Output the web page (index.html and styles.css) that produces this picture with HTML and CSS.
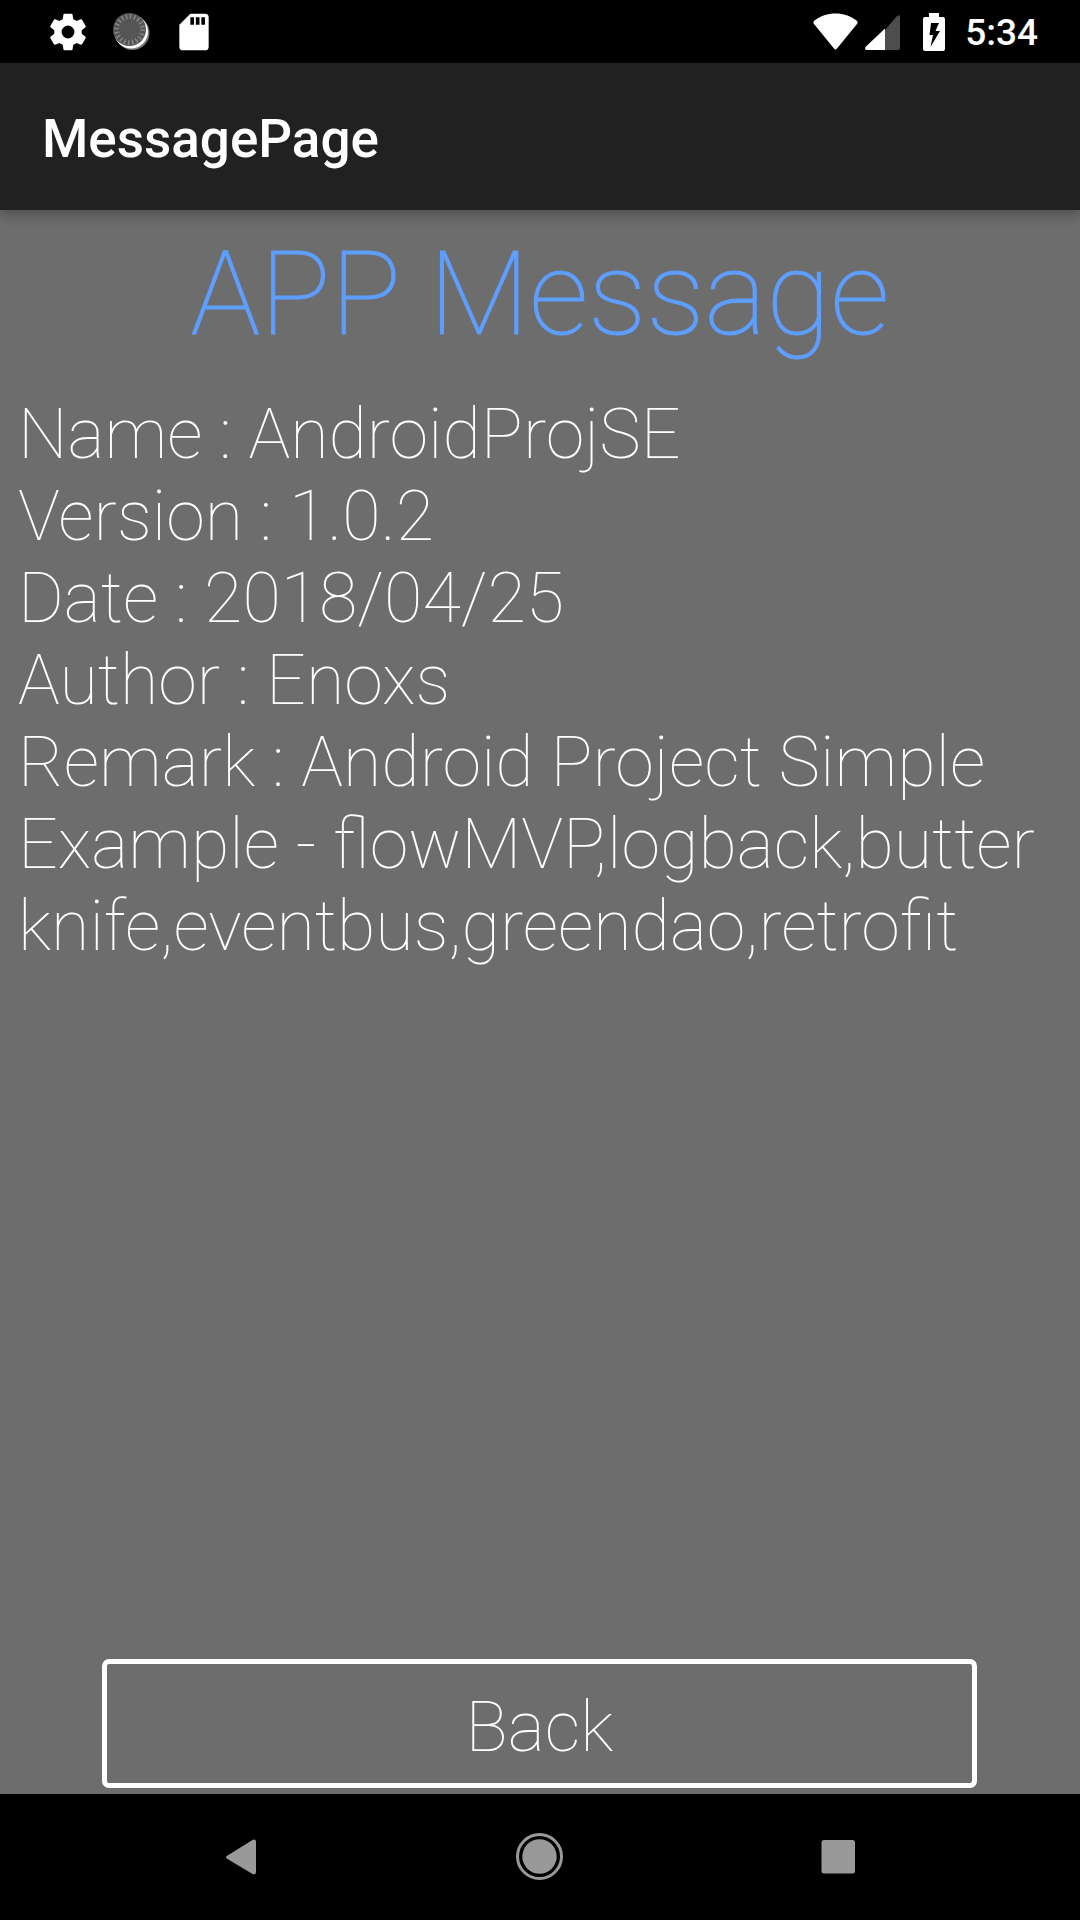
FILE: index.html
```html
<!DOCTYPE html>
<html lang="en">
<head>
<meta charset="utf-8">
<meta name="viewport" content="width=device-width, initial-scale=1">
<title>MessagePage</title>
<link rel="stylesheet" href="styles.css">
</head>
<body>
<div class="status">
  <div class="notices">
    <svg class="icon" viewBox="0 0 24 24" aria-hidden="true"><path fill="#fff" d="M19.43 12.98c.04-.32.07-.64.07-.98s-.03-.66-.07-.98l2.11-1.65c.19-.15.24-.42.12-.64l-2-3.46c-.12-.22-.39-.3-.61-.22l-2.49 1c-.52-.4-1.08-.73-1.69-.98l-.38-2.65C14.46 2.180 14.25 2 14 2h-4c-.25 0-.46.18-.49.42l-.38 2.65c-.61.25-1.17.59-1.69.98l-2.49-1c-.23-.09-.49 0-.61.22l-2 3.460c-.13.22-.07.49.12.64l2.11 1.65c-.04.32-.07.65-.07.98s.03.66.07.98l-2.11 1.65c-.19.15-.24.42-.12.64l2 3.46c.12.22.39.3.61.22l2.49-1c.52.4 1.08.73 1.69.98l.38 2.650c.03.24.24.42.49.42h4c.25 0 .46-.18.49-.42l.38-2.65c.61-.25 1.17-.59 1.69-.98l2.49 1c.23.09.49 0 .61-.22l2-3.46c.12-.22.07-.49-.12-.64zM12 15.500a3.500 3.500 0 1 1 0-7 3.500 3.500 0 0 1 0 7z"/></svg>
    <svg class="icon" viewBox="0 0 44 44" aria-hidden="true">
      <circle cx="23.500" cy="23" r="17" fill="#777"/>
      <circle cx="22" cy="21.500" r="17" fill="#fff"/>
      <circle cx="20.500" cy="19.500" r="16.500" fill="#555"/>
      <circle cx="20.500" cy="19.500" r="13" fill="none" stroke="#888" stroke-width="5" stroke-dasharray="1.400 2.684"/>
    </svg>
    <svg class="icon" viewBox="0 0 24 24" aria-hidden="true"><path fill="#fff" fill-rule="evenodd" d="M18 2h-8L4 8v12a2 2 0 0 0 2 2h12a2 2 0 0 0 2-2V4a2 2 0 0 0-2-2zM10 8V4h2v4zm3 0V4h2v4zm3 0V4h2v4z"/></svg>
  </div>
  <div class="system">
    <svg class="wifi" viewBox="0 0 45 38" aria-hidden="true"><path fill="#fff" d="M1.500 7.500C13-2 32-2 43.500 7.500q2 1.500.500 3.500L24 35.500q-1.500 2-3 0L1 11q-1.500-2 .500-3.500z"/></svg>
    <svg class="signal" viewBox="0 0 35 38" aria-hidden="true"><path fill="#4d4d4d" d="M20 17 32 3q3-2 3 1v31q0 2-2 2H20z"/><path fill="#fff" d="M20 15.500V37H2q-3 0-1.500-3z"/></svg>
    <svg class="battery" viewBox="0 0 22 38" aria-hidden="true"><path fill="#fff" fill-rule="evenodd" d="M6 0h10v4h4q2 0 2 2v30q0 2-2 2H2q-2 0-2-2V6q0-2 2-2h4zM8 10 6.500 22H10L7.500 34 17 18h-4.500L16 10z"/></svg>
    <time class="clock">5:34</time>
  </div>
</div>
<header class="bar"><h1 class="name">MessagePage</h1></header>
<main class="page">
  <h2 class="title">APP Message</h2>
  <p class="details">Name : AndroidProjSE<br>Version : 1.0.2<br>Date : 2018/04/25<br>Author : Enoxs<br>Remark : Android Project Simple Example - flowMVP,logback,butter<wbr>knife,eventbus,greendao,retrofit</p>
  <button class="back" type="button">Back</button>
</main>
<nav class="nav" aria-label="System">
  <button class="key" type="button" aria-label="Back"><svg class="glyph" viewBox="0 0 48 48" aria-hidden="true"><path fill="#999" d="M9.500 22.500 34.500 7q3.500-1.500 3.500 2v30q0 3.500-3.500 2L9.500 26q-3-1.800 0-3.500z"/></svg></button>
  <button class="key" type="button" aria-label="Home"><svg class="glyph" viewBox="0 0 48 48" aria-hidden="true"><circle cx="23.500" cy="23.500" r="22" fill="none" stroke="#999" stroke-width="3"/><circle cx="23.500" cy="23.500" r="17.200" fill="#999"/></svg></button>
  <button class="key" type="button" aria-label="Overview"><svg class="glyph" viewBox="0 0 48 48" aria-hidden="true"><rect x="7.500" y="7" width="33.500" height="33.500" rx="2.500" fill="#999"/></svg></button>
</nav>
</body>
</html>
```
FILE: styles.css
```css
* { box-sizing: border-box; }

body {
  margin: 0;
  min-height: 100vh;
  display: flex;
  flex-direction: column;
  font-family: Roboto, sans-serif;
  color: #fff;
  background: #6d6d6d;
}

/* Status bar */
.status {
  height: 63px;
  padding: 0 42px 0 46px;
  display: flex;
  justify-content: space-between;
  background: #000;
}
.notices { display: flex; align-items: center; gap: 19px; }
.system { display: flex; align-items: center; }
.icon { width: 44px; height: 44px; }
.wifi { width: 45px; height: 38px; margin-right: 7px; }
.signal { width: 35px; height: 38px; margin-right: 23px; }
.battery { width: 22px; height: 38px; margin-right: 20px; }
.clock { font-size: 37px; font-weight: 500; line-height: 63px; padding-top: 2px; }

/* App bar */
.bar {
  height: 147px;
  padding: 0 42px;
  background: #212121;
  box-shadow: 0 4px 12px rgba(0, 0, 0, .3);
}
.name { margin: 0; font-size: 53px; font-weight: 500; line-height: 152px; }

/* Content */
.page {
  flex: 1;
  display: flex;
  flex-direction: column;
  padding-bottom: 6px;
}
.title {
  margin: 0;
  color: #5e9eff;
  text-align: center;
  font-size: 117px;
  font-weight: 100;
  line-height: 168px;
  -webkit-text-stroke: 1px #5e9eff;
}
.details {
  margin: 15px 18px 24px;
  font-size: 70px;
  font-weight: 100;
  line-height: 82px;
}
.back {
  height: 129px;
  margin: auto 103px 0 102px;
  padding: 6px 0 0;
  border: 5px solid #fff;
  border-radius: 7px;
  background: none;
  color: inherit;
  font-family: inherit;
  font-size: 70px;
  font-weight: 100;
}

/* Navigation bar */
.nav {
  height: 126px;
  padding: 0 93px;
  display: grid;
  grid-template-columns: repeat(3, 1fr);
  background: #000;
}
.key {
  display: flex;
  align-items: center;
  justify-content: center;
  padding: 0;
  border: 0;
  background: none;
}
.glyph { width: 48px; height: 48px; }
```
